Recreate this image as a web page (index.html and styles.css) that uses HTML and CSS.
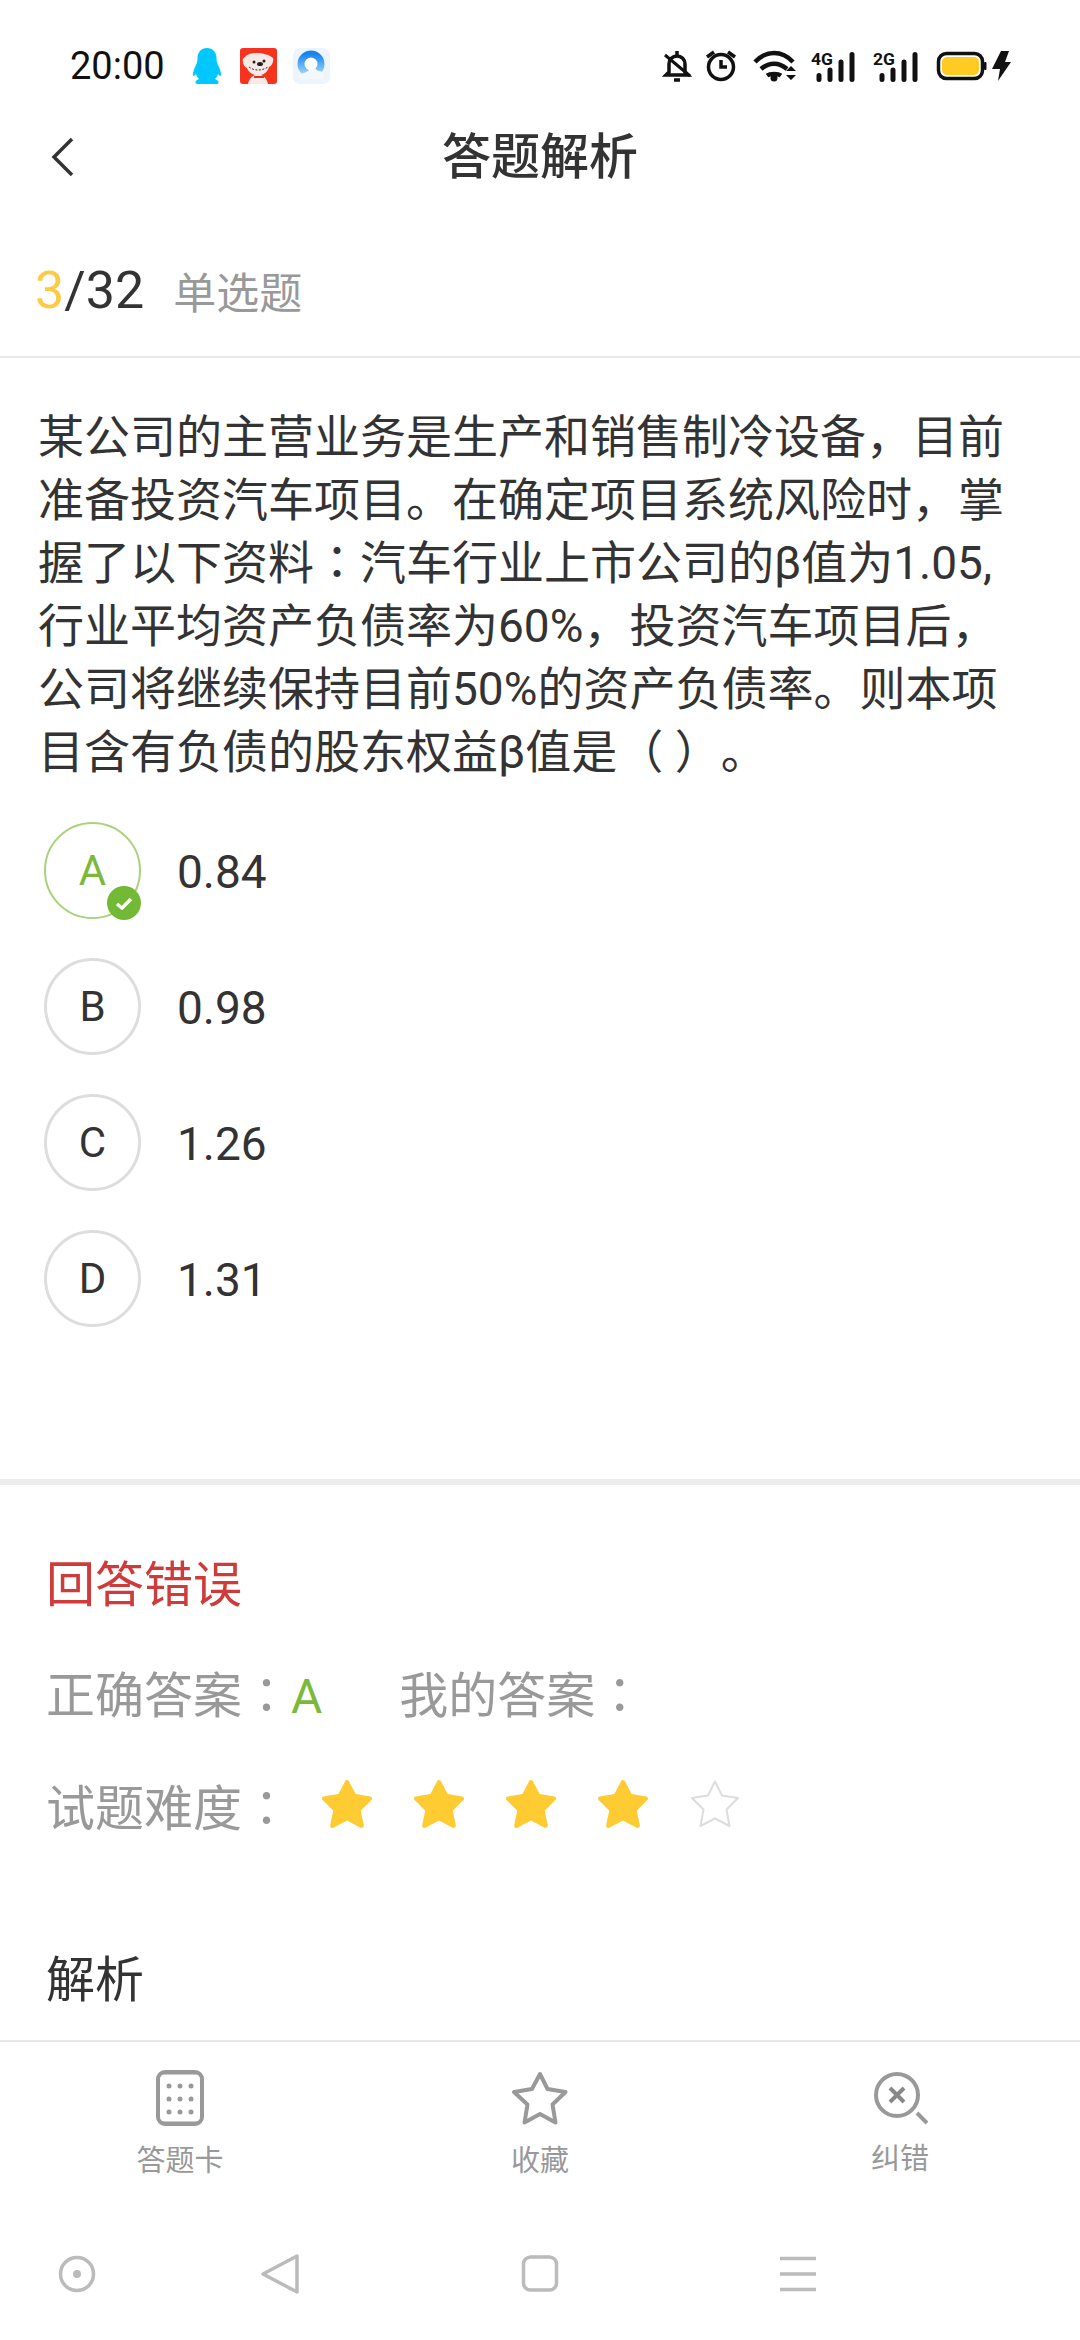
FILE: index.html
```html
<!DOCTYPE html>
<html lang="zh-CN">
<head>
<meta charset="utf-8">
<title>答题解析</title>
<link rel="stylesheet" href="styles.css">
</head>
<body>
<div class="screen">
  <header class="status">
    <span class="time">20:00</span>
    <svg class="app-icon penguin" viewBox="0 0 30 36"><path fill="#00c8ff" d="M15 0c6 0 9.500 4.500 9.500 10 0 3 .5 5 2 8 1.500 3.200 3 7.500 2.500 9.500-.3 1-1.500.3-3-1.500-.5 2-1.500 3.500-3 5 2 1 3.500 2 3.500 3.500 0 1-1.500 1.500-3 1.500H6.500c-1.500 0-3-.5-3-1.500 0-1.500 1.500-2.500 3.500-3.500-1.500-1.500-2.500-3-3-5-1.500 1.800-2.700 2.500-3 1.500-.5-2 1-6.300 2.500-9.500 1.500-3 2-5 2-8C5.500 4.500 9 0 15 0z"/></svg>
    <svg class="app-icon jd" viewBox="0 0 37 36"><rect width="37" height="36" rx="3" fill="#f5331e"/><path fill="#f7e9e3" d="M3 11c3-4 7-6 13-6 7 0 14 2 17 5 1 3-1 8-4 9-1 4-4 7-8 8 3 1 6 4 7 9H8c1-5 4-8 7-9-4-1-7-4-8-7-3-1-5-5-4-9z"/><circle cx="14" cy="14" r="1.500" fill="#222"/><circle cx="24" cy="13" r="1.500" fill="#222"/><ellipse cx="20" cy="16" rx="3" ry="2" fill="#222"/><path d="M9 19c5 4 13 4 19 0" fill="none" stroke="#333" stroke-width="1" stroke-dasharray="2 1.500"/><path d="M14 29h10" stroke="#d8352a" stroke-width="2"/></svg>
    <svg class="app-icon qqb" viewBox="0 0 37 36"><defs><linearGradient id="qb" x1="0" y1="0" x2="0" y2="1"><stop offset="0" stop-color="#1783ef"/><stop offset="1" stop-color="#9fd6f7"/></linearGradient></defs><rect width="37" height="36" rx="7" fill="#eef4fb"/><circle cx="18" cy="16" r="10" fill="#fff" stroke="url(#qb)" stroke-width="7"/><path fill="#f4f8fc" d="M9 31c-3 0-4-3-2-5 2-1 5-1 8-3 3-3 8-3 10 0 3 0 6 1 6 4s-1 4-4 4z"/></svg>
    <svg class="sys-icons" viewBox="660 46 355 40">
      <g fill="none" stroke="#111" stroke-width="3.500">
        <path d="M669 72v-8a8 8 0 0 1 16 0v8l3 3h-22z"/><path d="M674 80h6M677 51v4"/>
        <path d="M665 55l25 21" stroke-width="3"/>
        <circle cx="721" cy="67" r="12.500"/><path d="M721 60v7h6M707 57l7-5M735 57l-7-5"/>
        <path stroke-width="4.500" d="M755 62c11-12 27-12 38 0M761 69c8-7 18-7 26 0M767 75.500c3-2 11-2 14 0"/>
      </g>
      <circle cx="774" cy="78" r="3.500" fill="#111"/>
      <path fill="#111" d="M786 71l5-5 5 5zM786 75l5 5 5-5z"/>
      <text class="net" x="811" y="65" textLength="22" lengthAdjust="spacingAndGlyphs">4G</text>
      <path stroke="#111" stroke-width="5" stroke-linecap="round" d="M819 75.500v4M830 70v9.500M841 62v17.500M852 54.500v25"/>
      <text class="net" x="873" y="65" textLength="22" lengthAdjust="spacingAndGlyphs">2G</text>
      <path stroke="#111" stroke-width="5" stroke-linecap="round" d="M882 75.500v4M893 70v9.500M904 62v17.500M915 54.500v25"/>
      <rect x="938.500" y="53.500" width="44" height="25" rx="8" fill="none" stroke="#111" stroke-width="3.500"/>
      <rect x="942" y="57" width="37" height="18" rx="5" fill="#ffcb22"/>
      <rect x="984" y="62" width="2.500" height="8" rx="1" fill="#111"/>
      <path fill="#111" d="M1001 51h8l-4 11h6l-13 19 2-12h-8z"/>
    </svg>
  </header>

  <nav class="topbar">
    <svg class="back" viewBox="0 0 24 40"><path d="M22 2L4 20l18 18" fill="none" stroke="#333" stroke-width="3.500"/></svg>
    <h1 class="title">答题解析</h1>
  </nav>

  <main class="content">
    <div class="progress">
      <span class="count"><span class="current">3</span>/32</span>
      <span class="qtype">单选题</span>
    </div>

    <p class="question">某公司的主营业务是生产和销售制冷设备，目前准备投资汽车项目。在确定项目系统风险时，掌握了以下资料<span class="colon" lang="zh-Hant">：</span>汽车行业上市公司的β值为1.05,<br>行业平均资产负债率为60%，投资汽车项目后，公司将继续保持目前50%的资产负债率。则本项目含有负债的股东权益β值是（ ）。</p>

    <ul class="options">
      <li class="option is-right">
        <span class="letter">A<svg class="tick" viewBox="0 0 34 34"><circle cx="17" cy="17" r="17" fill="#74b936"/><path d="M10 18l5 4 9-9" fill="none" stroke="#fff" stroke-width="3.500"/></svg></span>
        <span class="value">0.84</span>
      </li>
      <li class="option"><span class="letter">B</span><span class="value">0.98</span></li>
      <li class="option"><span class="letter">C</span><span class="value">1.26</span></li>
      <li class="option"><span class="letter">D</span><span class="value">1.31</span></li>
    </ul>

    <section class="result">
      <div class="verdict">回答错误</div>
      <div class="row row-first">
        <span class="pair">正确答案<span class="colon" lang="zh-Hant">：</span><span class="answer">A</span></span>
        <span class="pair mine">我的答案<span class="colon" lang="zh-Hant">：</span></span>
      </div>
      <div class="row">
        <span class="pair">试题难度<span class="colon" lang="zh-Hant">：</span></span>
        <span class="stars">
          <svg class="star" viewBox="2 2 46 44"><path class="star-on" d="M25 4l6.500 12.500 14.500 2.500-10.500 10.500 3 14.500-13.500-7-13.500 7 3-14.500L4 19l14.500-2.500z"/></svg>
          <svg class="star" viewBox="2 2 46 44"><path class="star-on" d="M25 4l6.500 12.500 14.500 2.500-10.500 10.500 3 14.500-13.500-7-13.500 7 3-14.500L4 19l14.500-2.500z"/></svg>
          <svg class="star" viewBox="2 2 46 44"><path class="star-on" d="M25 4l6.500 12.500 14.500 2.500-10.500 10.500 3 14.500-13.500-7-13.500 7 3-14.500L4 19l14.500-2.500z"/></svg>
          <svg class="star" viewBox="2 2 46 44"><path class="star-on" d="M25 4l6.500 12.500 14.500 2.500-10.500 10.500 3 14.500-13.500-7-13.500 7 3-14.500L4 19l14.500-2.500z"/></svg>
          <svg class="star" viewBox="0 0 50 48"><path class="star-off" d="M25 1.500l7 14 16 2.500-11.500 11.500 3 16.500-14.500-7.500-14.500 7.500 3-16.500L2 18l16-2.500z"/></svg>
        </span>
      </div>
      <div class="analysis">解析</div>
    </section>
  </main>

  <footer class="tabs">
    <div class="tab">
      <svg class="tab-icon" viewBox="0 0 56 56"><rect x="6" y="2" width="44" height="52" rx="7" fill="none" stroke="#999" stroke-width="4"/><path d="M9 3h38M9 53h38" stroke="#999" stroke-width="3"/><g fill="#999"><circle cx="17" cy="16" r="2.500"/><circle cx="28" cy="16" r="2.500"/><circle cx="39" cy="16" r="2.500"/><circle cx="17" cy="29" r="2.500"/><circle cx="28" cy="29" r="2.500"/><circle cx="39" cy="29" r="2.500"/><circle cx="17" cy="42" r="2.500"/><circle cx="28" cy="42" r="2.500"/><circle cx="39" cy="42" r="2.500"/></g></svg>
      <span class="tab-label">答题卡</span>
    </div>
    <div class="tab">
      <svg class="tab-icon" viewBox="0 0 56 56"><path d="M28 4l7.500 15 18 3-13 12.500 3 18-15.500-8.500-15.500 8.500 3-18L2 22l18-3z" fill="none" stroke="#999" stroke-width="4" stroke-linejoin="round"/></svg>
      <span class="tab-label">收藏</span>
    </div>
    <div class="tab">
      <svg class="tab-icon" viewBox="0 0 56 56"><circle cx="25" cy="25" r="21" fill="none" stroke="#999" stroke-width="4"/><path d="M18 18l14 14M32 18L18 32" stroke="#888" stroke-width="4"/><path d="M45 43l10 10" stroke="#999" stroke-width="4"/></svg>
      <span class="tab-label tab-label-up">纠错</span>
    </div>
  </footer>

  <div class="sysnav">
    <svg class="sys-btn" viewBox="0 0 40 40"><circle cx="20" cy="20" r="16.500" fill="none" stroke="#bbb" stroke-width="3.500"/><circle cx="20" cy="20" r="4" fill="#bbb"/></svg>
    <svg class="sys-btn" viewBox="0 0 40 40"><path d="M37 2v36L3 20z" fill="none" stroke="#bbb" stroke-width="3.500" stroke-linejoin="round"/></svg>
    <svg class="sys-btn" viewBox="0 0 40 40"><rect x="3.500" y="3" width="33" height="33" rx="7" fill="none" stroke="#bbb" stroke-width="3.500"/></svg>
    <svg class="sys-btn" viewBox="0 0 40 40"><path d="M2 4.500h36M2 20h36M2 35.500h36" stroke="#bbb" stroke-width="3.500"/></svg>
  </div>
</div>
</body>
</html>
```

FILE: styles.css
```css
* { box-sizing: border-box; }

html, body {
  margin: 0;
  padding: 0;
  background: #fff;
}

body {
  font-family: Roboto, "Noto Sans CJK SC", sans-serif;
  color: #333;
}

.screen {
  width: 1080px;
  height: 2340px;
  display: flex;
  flex-direction: column;
  overflow: hidden;
}

.status {
  height: 120px;
  padding: 12px 65px 0 70px;
  display: flex;
  align-items: flex-start;
  flex-shrink: 0;
}

.time {
  width: 92px;
  margin-top: 32px;
  font-size: 38px;
  line-height: 44px;
  color: #111;
}

.app-icon {
  display: block;
  height: 36px;
  margin-top: 36px;
}

.penguin { width: 30px; margin-left: 30px; }
.jd { width: 37px; margin-left: 18px; }
.qqb { width: 37px; margin-left: 16px; }

.sys-icons {
  display: block;
  width: 355px;
  height: 40px;
  margin-top: 34px;
  margin-left: auto;
}

.net {
  font-family: Roboto, sans-serif;
  font-size: 16px;
  font-weight: 700;
  fill: #111;
}

.topbar {
  height: 76px;
  display: flex;
  align-items: center;
  justify-content: center;
  position: relative;
  flex-shrink: 0;
}

.back {
  position: absolute;
  left: 50px;
  top: 17px;
  width: 24px;
  height: 40px;
}

.title {
  margin: 0;
  font-size: 49px;
  line-height: 76px;
  font-weight: 500;
  color: #333;
}

.content {
  flex: 1;
  min-height: 0;
  overflow: hidden;
}

.progress {
  margin-top: 30px;
  height: 132px;
  padding-left: 35px;
  display: flex;
  align-items: center;
  gap: 29px;
  border-bottom: 2px solid #e8e8e8;
  padding-bottom: 2px;
}

.count { font-size: 52px; color: #333; }
.current { color: #fccb45; }
.qtype { font-size: 43px; color: #999; }

.question {
  margin: 0;
  padding: 48px 38px 0 38px;
  font-size: 46px;
  line-height: 63px;
  color: #333;
  text-spacing-trim: space-all;
}

.colon {
  font-family: "Noto Sans CJK TC", sans-serif;
  line-height: 0;
}

.options {
  list-style: none;
  margin: 0;
  padding: 38px 0 0 44px;
  display: flex;
  flex-direction: column;
  gap: 40px;
}

.option {
  display: flex;
  align-items: center;
  height: 96px;
  gap: 36px;
}

.letter {
  position: relative;
  width: 97px;
  height: 97px;
  border-radius: 50%;
  border: 3px solid #ddd;
  display: flex;
  align-items: center;
  justify-content: center;
  font-size: 42px;
  color: #333;
}

.is-right .letter {
  border: 2px solid #a9d27c;
  color: #7cb93b;
}

.tick {
  position: absolute;
  right: -2px;
  bottom: -3px;
  width: 34px;
  height: 34px;
}

.value { font-size: 46px; color: #333; padding-top: 4px; }

.result {
  margin-top: 153px;
  padding: 69px 0 0 46px;
  border-top: 6px solid #ececec;
}

.verdict {
  font-size: 49px;
  line-height: 64px;
  color: #cf3a3a;
}

.row {
  display: flex;
  align-items: center;
  height: 64px;
  margin-top: 49px;
  font-size: 49px;
  color: #999;
}

.row-first { margin-top: 41px; }

.pair { display: flex; align-items: baseline; }
.answer { color: #7cb93b; font-size: 48px; }
.mine { margin-left: 77px; }

.stars {
  display: flex;
  gap: 42px;
  margin-left: 31px;
}

.star { display: block; width: 50px; height: 48px; }
.star-on { fill: #ffcb33; stroke: #ffcb33; stroke-width: 4; stroke-linejoin: round; }
.star-off { fill: #fff; stroke: #ddd; stroke-width: 2; stroke-linejoin: round; }

.analysis {
  margin-top: 113px;
  font-size: 49px;
  line-height: 64px;
  color: #333;
}

.tabs {
  height: 190px;
  flex-shrink: 0;
  border-top: 2px solid #e8e8e8;
  display: grid;
  grid-template-columns: repeat(3, 1fr);
  padding-top: 28px;
}

.tab {
  display: flex;
  flex-direction: column;
  align-items: center;
}

.tab-icon { display: block; width: 56px; height: 56px; }

.tab-label {
  margin-top: 15px;
  font-size: 29px;
  line-height: 40px;
  color: #999;
}

.tab-label-up { margin-top: 13px; }

.sysnav {
  height: 110px;
  flex-shrink: 0;
  display: grid;
  grid-template-columns: 153px 254px 266px 250px;
  justify-items: center;
  padding-top: 24px;
  align-items: start;
}

.sys-btn { display: block; width: 40px; height: 40px; }
```
